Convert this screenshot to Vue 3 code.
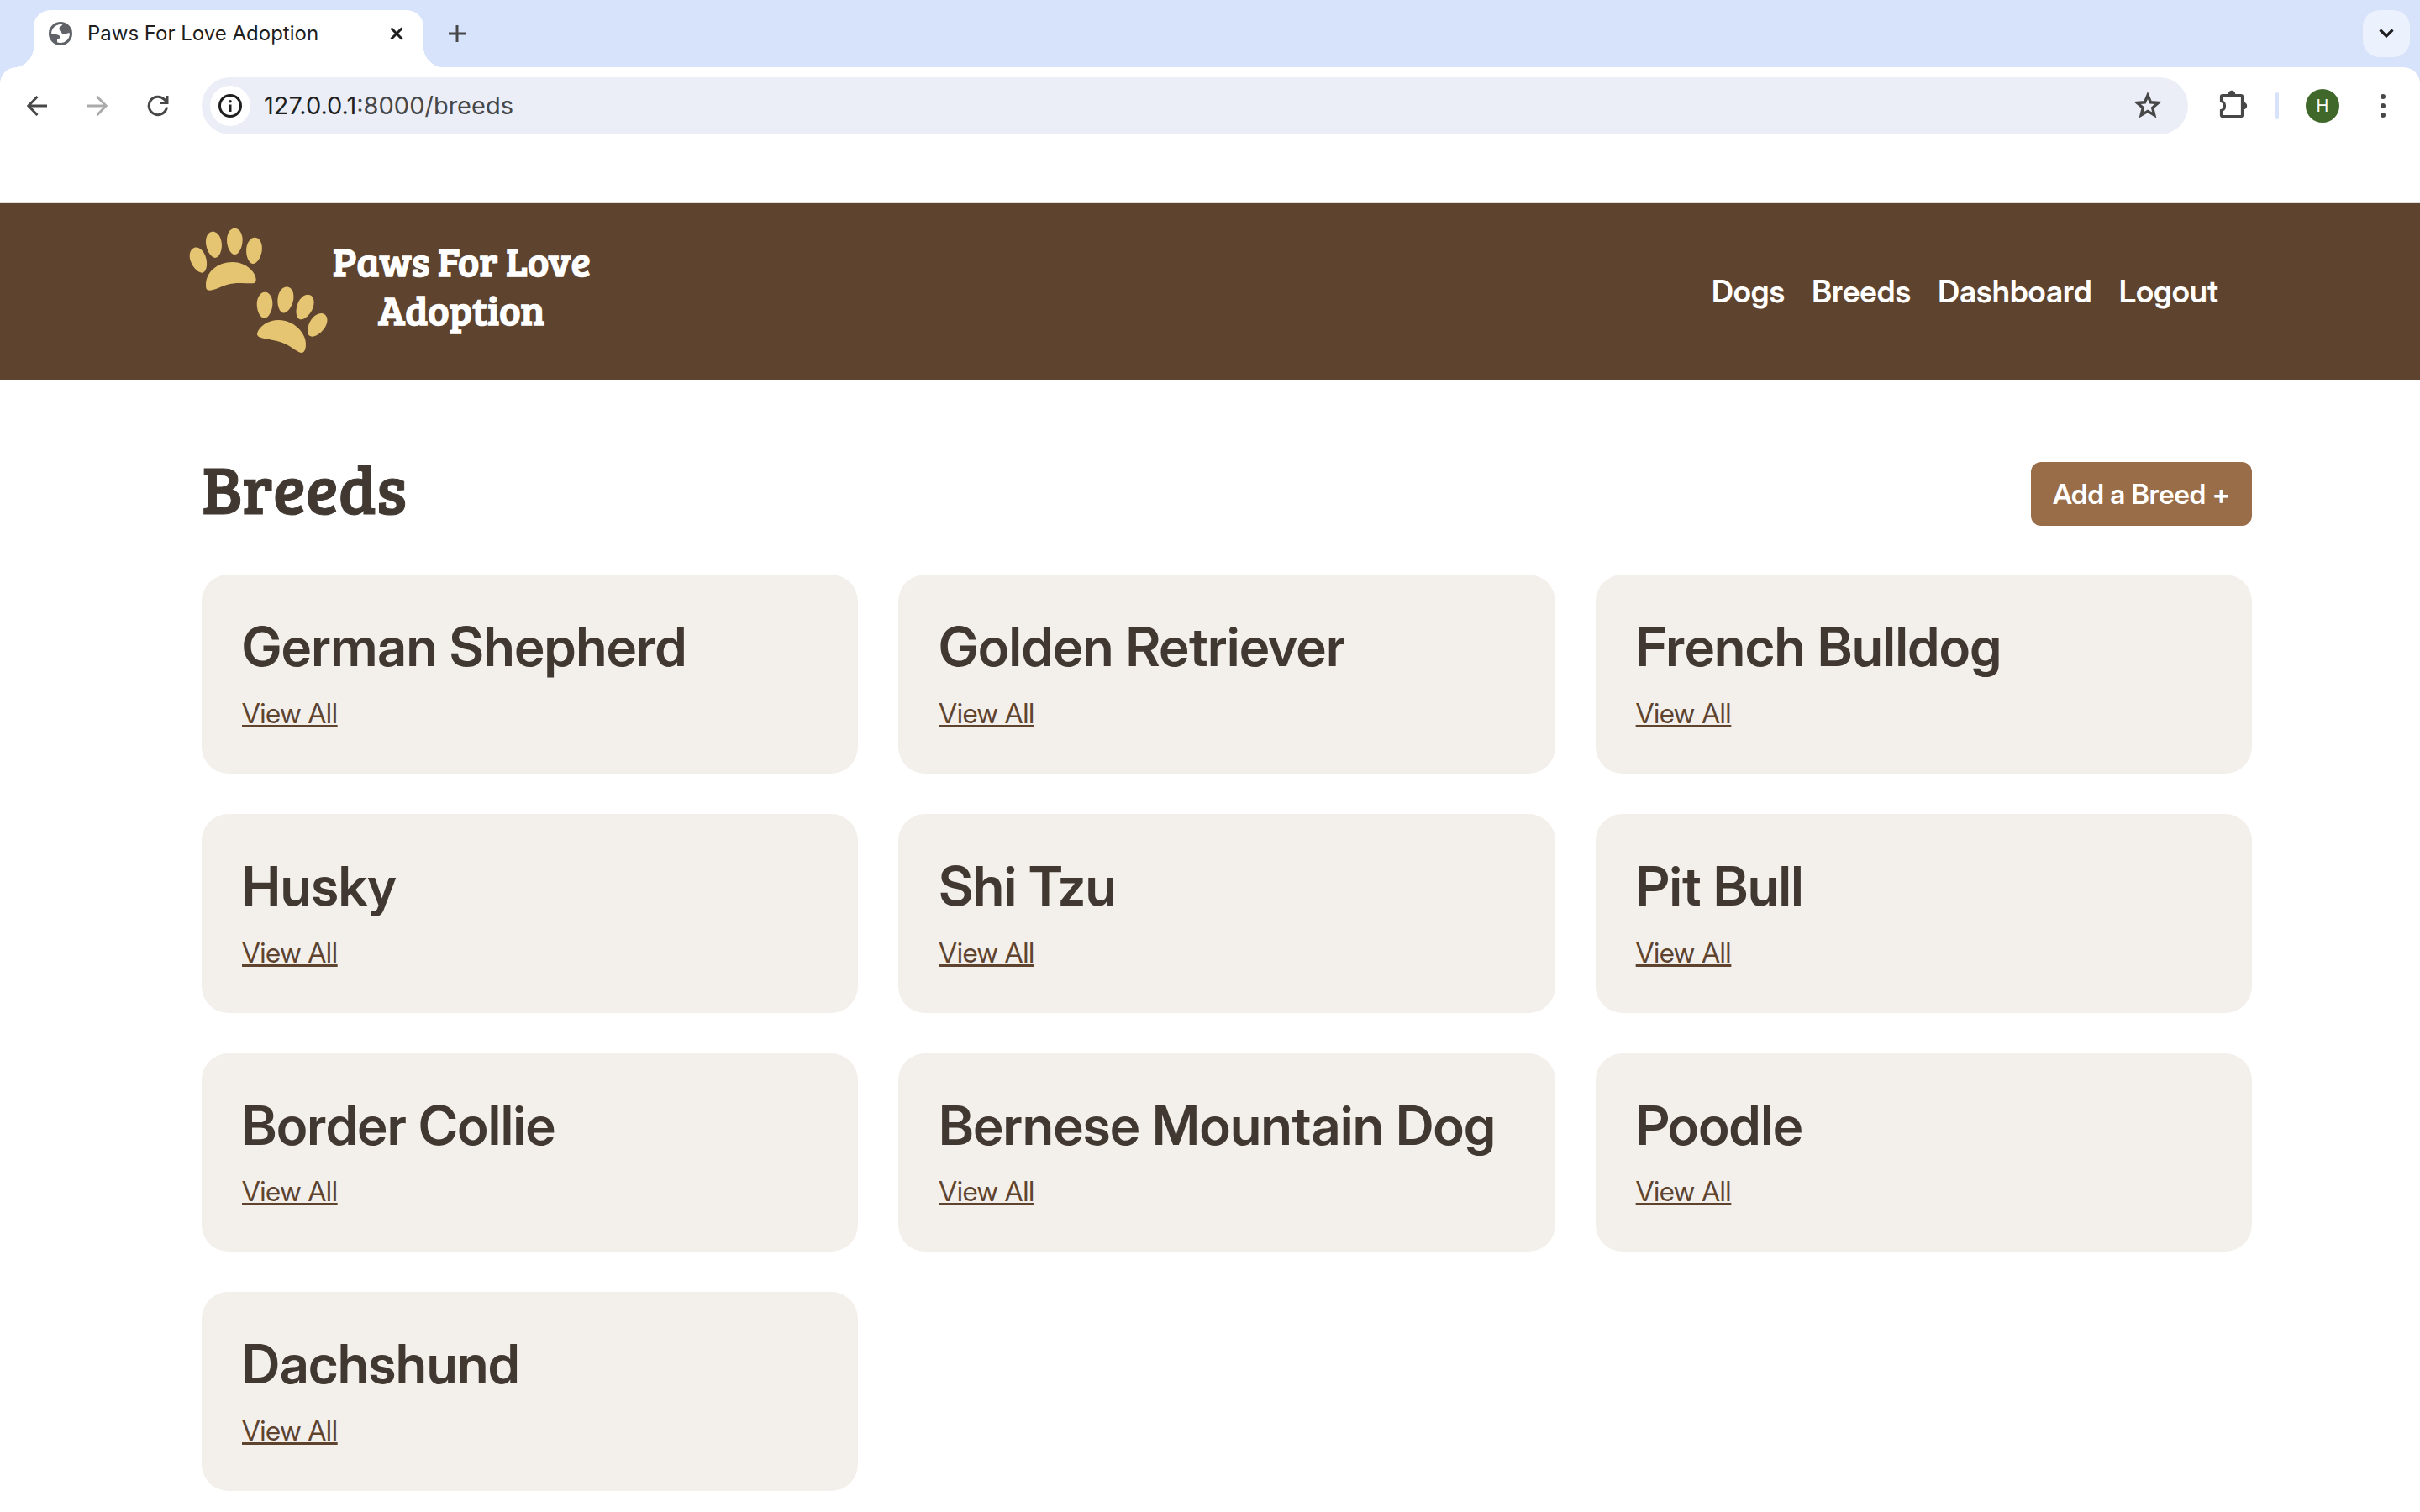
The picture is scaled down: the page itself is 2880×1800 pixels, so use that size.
<script setup>
const breeds = [
  'German Shepherd', 'Golden Retriever', 'French Bulldog',
  'Husky', 'Shi Tzu', 'Pit Bull',
  'Border Collie', 'Bernese Mountain Dog', 'Poodle',
  'Dachshund',
]
const links = ['Dogs', 'Breeds', 'Dashboard', 'Logout']
const toes = [
  [49, 134, -20], [104, 79, -8], [178, 67, 0], [247, 100, 6],
  [285, 295, 2], [359, 276, 10], [428, 302, 24], [472, 366, 35],
]
const toeShape = 'M0 -47C17 -47 28 -27 28 -5C28 22 14 47 0 47C-14 47 -28 22 -28 -5C-28 -27 -17 -47 0 -47Z'
</script>

<template>
  <div class="window">
    <div class="tabstrip">
      <div class="tab">
        <svg class="globe" viewBox="0 0 28 28" aria-hidden="true">
          <circle cx="14" cy="14" r="14" fill="#5f6368" />
          <path fill="#fff" d="M14 3C15 3 16 3.200 16.500 3.400C15 5 12.500 6 12.300 8C12.200 10 15 10 15 12C15 14 17 14.500 19 14.200C22 14 25 12.500 25 14C25 20 20 25 14 25C12.500 25 11 24.700 10 24.200L10 21C10 19.500 14 20.500 14 18.500C14 16.500 11 15.500 9 15L3.100 14C3.100 8 8 3 14 3Z" />
        </svg>
        <span class="tab-title">Paws For Love Adoption</span>
        <button class="icon-btn tab-close" aria-label="Close tab">
          <svg width="16" height="16" viewBox="0 0 16 16"><path d="M1.500 1.500L14.500 14.500M14.500 1.500L1.500 14.500" stroke="#1f1f1f" stroke-width="3" /></svg>
        </button>
      </div>
      <button class="icon-btn new-tab" aria-label="New tab">
        <svg width="20" height="20" viewBox="0 0 20 20"><path d="M10 0V20M0 10H20" stroke="#474747" stroke-width="3" /></svg>
      </button>
      <button class="icon-btn tab-search" aria-label="Search tabs">
        <svg width="18" height="12" viewBox="0 0 18 12"><path d="M1.500 1.500L9 9L16.500 1.500" fill="none" stroke="#1f1f1f" stroke-width="3.200" /></svg>
      </button>
    </div>

    <div class="toolbar">
      <button class="icon-btn nav-btn" aria-label="Back">
        <svg width="24" height="24" viewBox="0 0 24 24"><path d="M24 12H2M12.500 1L1.800 12L12.500 23" fill="none" stroke="#474747" stroke-width="3" /></svg>
      </button>
      <button class="icon-btn nav-btn" aria-label="Forward">
        <svg width="24" height="24" viewBox="0 0 24 24"><path d="M0 12H22M11.500 1L22.200 12L11.500 23" fill="none" stroke="#ababab" stroke-width="3" /></svg>
      </button>
      <button class="icon-btn nav-btn" aria-label="Reload">
        <svg width="26" height="26" viewBox="0 0 26 26"><path d="M23.500 14.500A10.700 10.700 0 1 1 20.500 5.400L23.500 8.500" fill="none" stroke="#474747" stroke-width="3" /><path d="M25.500 1V11H15V8H22.500V1Z" fill="#474747" /></svg>
      </button>
      <div class="omnibox">
        <span class="site-info">
          <svg width="28" height="28" viewBox="0 0 28 28"><circle cx="14" cy="14" r="12.500" fill="none" stroke="#1f1f1f" stroke-width="3" /><path d="M14 12.500V21" stroke="#1f1f1f" stroke-width="3" /><circle cx="14" cy="8.700" r="1.800" fill="#1f1f1f" /></svg>
        </span>
        <span class="url">127.0.0.1<span class="path">:8000/breeds</span></span>
        <button class="icon-btn star" aria-label="Bookmark this tab">
          <svg width="34" height="34" viewBox="0 0 34 34"><path d="M17 4.500L20.500 12.800L29.500 13.500L22.700 19.300L24.800 28L17 23.400L9.200 28L11.300 19.300L4.500 13.500L13.500 12.800Z" fill="none" stroke="#474747" stroke-width="3.400" /></svg>
        </button>
      </div>
      <button class="icon-btn ext" aria-label="Extensions">
        <svg width="36" height="38" viewBox="0 0 36 38"><path d="M3.500 8Q3.500 6.500 5 6.500H27Q28.500 6.500 28.500 8V30Q28.500 31.500 27 31.500H5Q3.500 31.500 3.500 30V24.500Q7.500 23.500 7.500 19Q7.500 14.500 3.500 13.500Z" fill="none" stroke="#474747" stroke-width="3.200" /><path d="M11.800 5A4.200 4.200 0 0 1 20.200 5ZM30 14.800A4.200 4.200 0 0 1 30 23.200Z" fill="#474747" /></svg>
      </button>
      <span class="divider"></span>
      <button class="avatar" aria-label="Profile">H</button>
      <button class="icon-btn menu" aria-label="Menu">
        <svg width="6" height="28" viewBox="0 0 6 28"><g fill="#474747"><circle cx="3" cy="3" r="3" /><circle cx="3" cy="14" r="3" /><circle cx="3" cy="25" r="3" /></g></svg>
      </button>
    </div>

    <header class="site-header">
      <a class="brand" href="#">
        <svg class="paws" viewBox="0 0 528 492" fill="#e5c472" aria-hidden="true">
          <path v-for="t in toes" :key="t[0]" :d="toeShape" :transform="`translate(${t[0]} ${t[1]}) rotate(${t[2]})`" />
          <path d="M75 222C75 175 118 141 170 141C222 141 254 180 254 203C254 214 248 217 236 217C200 216 180 213 150 222C125 230 105 242 88 242C77 242 75 236 75 222Z" />
          <path d="M258 397C264 370 298 348 335 348C390 348 432 395 432 432C432 455 426 465 417 465C405 465 385 446 360 434C335 421 300 417 280 413C265 410 258 406 258 397Z" />
        </svg>
        <span class="brand-name">Paws For Love<br />Adoption</span>
      </a>
      <nav class="site-nav">
        <a v-for="l in links" :key="l" href="#">{{ l }}</a>
      </nav>
    </header>

    <main class="content">
      <div class="heading">
        <h1>Breeds</h1>
        <button class="add">Add a Breed +</button>
      </div>
      <div class="grid">
        <section v-for="b in breeds" :key="b" class="card">
          <h2>{{ b }}</h2>
          <a href="#">View All</a>
        </section>
      </div>
    </main>
  </div>
</template>

<style>
body {
  margin: 0;
  background: #fff;
}
</style>

<style scoped>
.window {
  font-family: Inter, "Liberation Sans", sans-serif;
  color: #413931;
}
.window * {
  box-sizing: border-box;
}
.window svg {
  display: block;
}
button {
  margin: 0;
  padding: 0;
  border: 0;
  font: inherit;
  cursor: pointer;
}
.icon-btn {
  display: flex;
  align-items: center;
  justify-content: center;
  flex: none;
  background: transparent;
}

.tabstrip {
  display: flex;
  align-items: flex-end;
  height: 100px;
  padding: 0 12px 20px 40px;
  background: #d7e2fb;
}
.tab {
  position: relative;
  display: flex;
  align-items: center;
  width: 464px;
  height: 68px;
  padding: 0 24px 12px 18px;
  border-radius: 20px 20px 0 0;
  background: #fff;
}
.tab::before,
.tab::after {
  content: "";
  position: absolute;
  bottom: 0;
  width: 24px;
  height: 24px;
}
.tab::before {
  right: 100%;
  background: radial-gradient(circle at 0 0, transparent 24px, #fff 24px);
}
.tab::after {
  left: 100%;
  background: radial-gradient(circle at 100% 0, transparent 24px, #fff 24px);
}
.globe {
  width: 28px;
  height: 28px;
}
.tab-title {
  flex: 1;
  margin-left: 18px;
  font-size: 24px;
  line-height: 32px;
  color: #1f1f1f;
}
.new-tab {
  width: 56px;
  height: 56px;
  margin: 0 auto 12px 12px;
}
.tab-search {
  width: 56px;
  height: 56px;
  margin-bottom: 12px;
  border-radius: 20px;
  background: #ebf2fd;
}

.toolbar {
  position: relative;
  display: flex;
  align-items: center;
  height: 162px;
  margin-top: -20px;
  padding: 12px 20px 80px 8px;
  border-bottom: 2px solid #dedede;
  border-radius: 20px 20px 0 0;
  background: #fff;
}
.nav-btn {
  width: 72px;
  height: 68px;
}
.omnibox {
  display: flex;
  flex: 1;
  align-items: center;
  height: 68px;
  margin-left: 16px;
  padding: 0 31px 0 10px;
  border-radius: 34px;
  background: #ebeef7;
}
.site-info {
  display: flex;
  align-items: center;
  justify-content: center;
  width: 48px;
  height: 48px;
  border-radius: 50%;
  background: #fff;
}
.url {
  flex: 1;
  margin-left: 16px;
  font-size: 29px;
  line-height: 40px;
  color: #1f1f1f;
}
.path {
  color: #474747;
}
.ext {
  margin-left: 36px;
}
.divider {
  width: 4px;
  height: 32px;
  margin: 0 32px;
  border-radius: 2px;
  background: #d7e2fb;
}
.avatar {
  width: 40px;
  height: 40px;
  border-radius: 50%;
  background: #40682a;
  color: #fff;
  font-size: 20px;
  line-height: 40px;
}
.menu {
  width: 56px;
  height: 56px;
  margin-left: 24px;
  margin-right: -4px;
}

.site-header,
.content {
  font-family: "Inter Display", Inter, "Liberation Sans", sans-serif;
}
.site-header {
  display: flex;
  align-items: center;
  justify-content: space-between;
  height: 210px;
  padding: 0 240px 0 220px;
  background: #5e432e;
}
.brand {
  display: flex;
  align-items: center;
  color: #fff;
  text-decoration: none;
}
.paws {
  width: 176px;
  height: 164px;
}
.brand-name {
  padding-bottom: 16px;
  font-family: "Bree Serif", "Liberation Serif", serif;
  font-weight: 700;
  font-size: 48px;
  line-height: 58px;
  text-align: center;
}
.site-nav {
  display: flex;
  gap: 32px;
}
.site-nav a {
  font-size: 37px;
  font-weight: 600;
  line-height: 54px;
  color: #fff;
  text-decoration: none;
}

.content {
  padding: 82px 200px 24px 240px;
}
.heading {
  display: flex;
  align-items: flex-end;
  justify-content: space-between;
  margin-bottom: 58px;
}
h1 {
  margin: 0;
  font-family: "Bree Serif", "Liberation Serif", serif;
  font-weight: 500;
  font-size: 80px;
  line-height: 92px;
  -webkit-text-stroke: 1px currentColor;
}
.add {
  height: 76px;
  padding: 0 26px;
  border-radius: 12px;
  background: #996d48;
  color: #fff;
  font-size: 33px;
  font-weight: 600;
}
.grid {
  display: grid;
  grid-template-columns: repeat(3, minmax(0, 1fr));
  gap: 48px;
}
.card {
  padding: 48px;
  border-radius: 32px;
  background: #f3efeb;
}
h2 {
  margin: 0 0 16px;
  font-size: 64px;
  font-weight: 600;
  line-height: 1.2;
}
.card a {
  display: block;
  width: fit-content;
  font-size: 33px;
  line-height: 48px;
  color: #5e432e;
  text-decoration-thickness: 3px;
}
</style>
